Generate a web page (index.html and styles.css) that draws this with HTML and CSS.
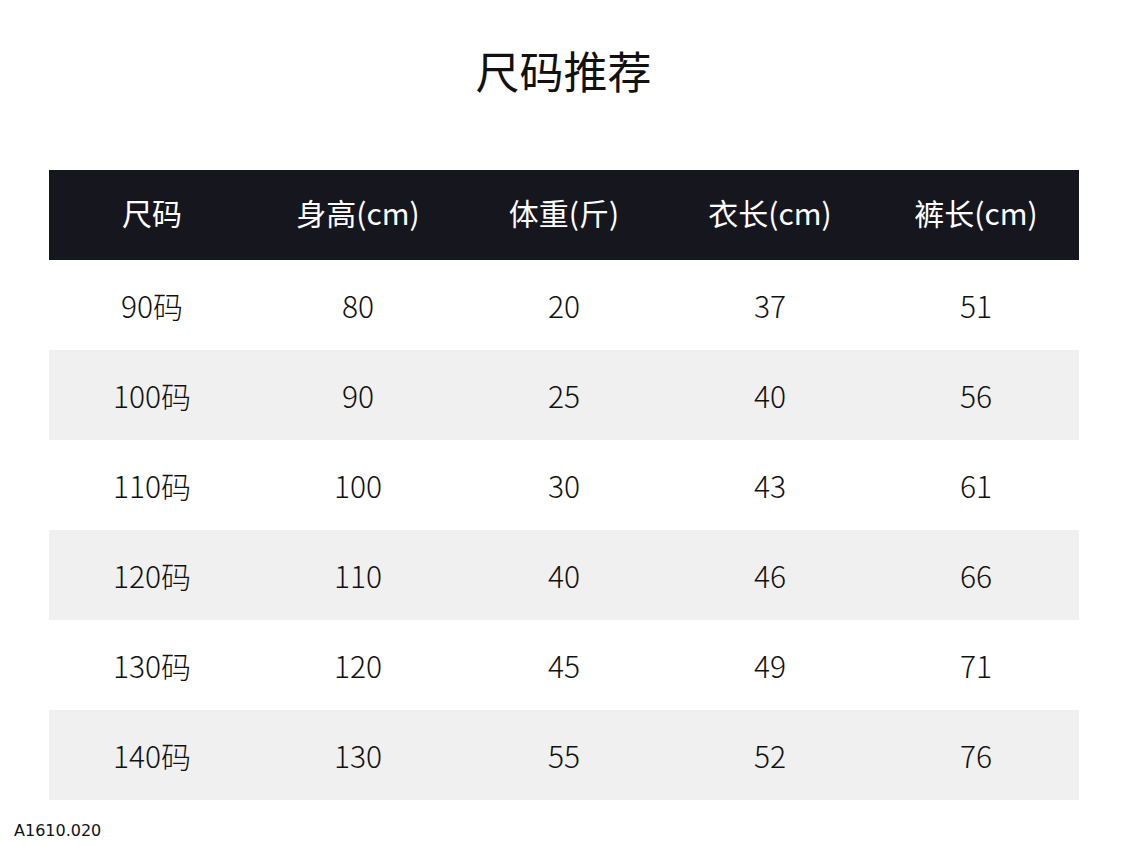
FILE: index.html
```html
<!DOCTYPE html>
<html lang="zh-CN">
<head>
<meta charset="utf-8">
<title>尺码推荐</title>
<link rel="stylesheet" href="styles.css">
</head>
<body>
<div class="page">
  <h1 class="title">尺码推荐</h1>
  <table class="size-table">
    <thead>
      <tr><th>尺码</th><th>身高(cm)</th><th>体重(斤)</th><th>衣长(cm)</th><th>裤长(cm)</th></tr>
    </thead>
    <tbody>
      <tr><td>90码</td><td>80</td><td>20</td><td>37</td><td>51</td></tr>
      <tr class="alt"><td>100码</td><td>90</td><td>25</td><td>40</td><td>56</td></tr>
      <tr><td>110码</td><td>100</td><td>30</td><td>43</td><td>61</td></tr>
      <tr class="alt"><td>120码</td><td>110</td><td>40</td><td>46</td><td>66</td></tr>
      <tr><td>130码</td><td>120</td><td>45</td><td>49</td><td>71</td></tr>
      <tr class="alt"><td>140码</td><td>130</td><td>55</td><td>52</td><td>76</td></tr>
    </tbody>
  </table>
  <div class="code">A1610.020</div>
</div>
</body>
</html>
```
FILE: styles.css
```css
html, body {
  margin: 0;
  padding: 0;
  background: #ffffff;
}
.page {
  width: 1125px;
  height: 847px;
  font-family: "Noto Sans CJK SC", "Noto Sans", sans-serif;
  color: #111;
}
.title {
  margin: 0 0 0 2px;
  padding-top: 40px;
  height: 60px;
  line-height: 60px;
  font-size: 44px;
  font-weight: 400;
  text-align: center;
  color: #111;
}
.size-table {
  margin: 70px 0 0 49px;
  width: 1030px;
  border-collapse: collapse;
  table-layout: fixed;
}
.size-table th,
.size-table td {
  height: 90px;
  padding: 0;
  text-align: center;
  vertical-align: middle;
  font-size: 30px;
  font-weight: 300;
}
.size-table th {
  height: 84px;
  padding-bottom: 6px;
  background: #16161f;
  color: #ffffff;
  font-weight: 400;
}
.size-table td {
  color: #111;
}
.size-table tr.alt td {
  background: #f0f0f0;
}
.code {
  margin: 20px 0 0 14px;
  font-family: "DejaVu Sans", sans-serif;
  font-size: 16px;
  line-height: 22px;
  color: #111;
}
```
